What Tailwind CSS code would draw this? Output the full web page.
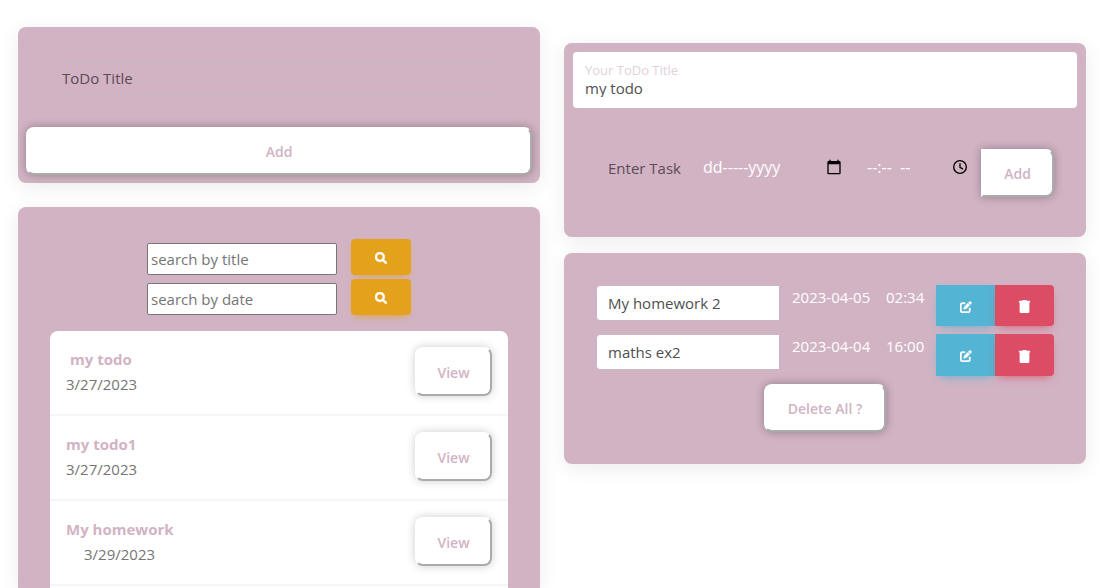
<!DOCTYPE html>
<html lang="en">
<head>
<meta charset="utf-8">
<title>ToDo</title>
<meta name="viewport" content="width=device-width, initial-scale=1">
<script src="https://cdn.jsdelivr.net/npm/@tailwindcss/browser@4"></script>
</head>
<body class="bg-white font-['Segoe_UI','Open_Sans',sans-serif] text-[15px] leading-6 text-[#4f4f4f]">
<svg class="hidden" aria-hidden="true">
  <symbol id="search" viewBox="0 0 512 512"><path fill="currentColor" stroke="currentColor" stroke-width="24" d="M505 442.7L405.3 343c-4.500-4.500-10.600-7-17-7H372c27.600-35.300 44-79.700 44-128C416 93.100 322.900 0 208 0S0 93.100 0 208s93.100 208 208 208c48.300 0 92.700-16.400 128-44v16.300c0 6.400 2.500 12.500 7 17l99.700 99.700c9.400 9.400 24.600 9.400 33.900 0l28.300-28.300c9.400-9.400 9.400-24.600.1-34zM208 336c-70.700 0-128-57.200-128-128 0-70.700 57.200-128 128-128 70.700 0 128 57.200 128 128 0 70.700-57.200 128-128 128z"/></symbol>
  <symbol id="edit" viewBox="0 0 512 512"><path fill="currentColor" stroke="currentColor" stroke-width="16" d="M472 40c-25-25-61-25-83 0l-35 35 83 83 35-35c24-24 24-60 0-83zM331 98L195 234c-6 6-11 14-14 23l-23 70c-5 16 11 31 27 27l70-23c9-3 17-8 23-14l136-136zM96 64C43 64 0 107 0 160v256c0 53 43 96 96 96h256c53 0 96-43 96-96v-96c0-18-14-32-32-32s-32 14-32 32v96c0 18-14 32-32 32H96c-18 0-32-14-32-32V160c0-18 14-32 32-32h96c18 0 32-14 32-32s-14-32-32-32z"/></symbol>
  <symbol id="trash" viewBox="0 0 448 512"><path fill="currentColor" d="M432 32H312l-9.400-18.700A24 24 0 0 0 281.100 0H166.800a23.700 23.700 0 0 0-21.400 13.300L136 32H16A16 16 0 0 0 0 48v32a16 16 0 0 0 16 16h416a16 16 0 0 0 16-16V48a16 16 0 0 0-16-16zM32 96h384v368a48 48 0 0 1-48 48H80a48 48 0 0 1-48-48z"/></symbol>
</svg>
<main class="grid h-screen grid-cols-2 gap-6 overflow-hidden pl-[18px] pr-[17px]">
  <div class="flex min-h-0 flex-col gap-6 pt-[27px]">
    <form class="rounded-lg bg-[#d1b3c4] p-2 shadow-[0_4px_20px_rgba(0,0,0,0.08)]">
      <div class="px-6 pt-[27px] pb-8">
        <input type="text" aria-label="ToDo Title" placeholder="ToDo Title" class="block h-[33px] w-full rounded border border-[#c9b5c4] px-[11px] pb-[2px] placeholder:text-[#5d4a56]">
      </div>
      <button type="button" class="block h-12 w-full rounded-lg border-2 border-white [border-style:outset] bg-white pt-[2px] text-sm font-semibold text-[#d1b3c4] shadow-[0_0_10px_rgba(0,0,0,0.3)]">Add</button>
    </form>
    <section class="flex min-h-0 flex-1 flex-col rounded-t-lg bg-[#d1b3c4] px-8 pt-8 shadow-[0_4px_20px_rgba(0,0,0,0.08)]">
      <form class="flex flex-col items-center gap-1">
        <div class="flex items-end gap-[14px]">
          <input type="text" aria-label="Search by title" placeholder="search by title" class="h-8 w-[190px] rounded-xs border border-[#767676] bg-white px-[3px] placeholder:text-[#757575]">
          <button type="button" aria-label="Search titles" class="flex h-9 w-[60px] items-center justify-center rounded bg-[#e4a11b] pt-[2px] text-white shadow-[0_4px_9px_-4px_#e4a11b]"><svg class="size-3 overflow-visible"><use href="#search"/></svg></button>
        </div>
        <div class="flex items-end gap-[14px]">
          <input type="text" aria-label="Search by date" placeholder="search by date" class="h-8 w-[190px] rounded-xs border border-[#767676] bg-white px-[3px] placeholder:text-[#757575]">
          <button type="button" aria-label="Search dates" class="flex h-9 w-[60px] items-center justify-center rounded bg-[#e4a11b] pt-[2px] text-white shadow-[0_4px_9px_-4px_#e4a11b]"><svg class="size-3 overflow-visible"><use href="#search"/></svg></button>
        </div>
      </form>
      <ul class="mt-4 min-h-0 flex-1 overflow-hidden rounded-t-lg bg-white">
        <li class="flex items-start justify-between border-b-2 border-[#f5f5f5] px-4 pt-4 pb-[17px]">
          <div class="leading-[25px]"><p class="pl-1 font-bold text-[#d1b3c4]">my todo</p><p class="text-[#757575]">3/27/2023</p></div>
          <button type="button" class="h-[49px] w-[77px] rounded-lg border-2 border-white [border-style:outset] bg-white pt-[2px] text-sm font-semibold text-[#d1b3c4] shadow-[0_0_10px_rgba(0,0,0,0.2)]">View</button>
        </li>
        <li class="flex items-start justify-between border-b-2 border-[#f5f5f5] px-4 pt-4 pb-[17px]">
          <div class="leading-[25px]"><p class="font-bold text-[#d1b3c4]">my todo1</p><p class="text-[#757575]">3/27/2023</p></div>
          <button type="button" class="h-[49px] w-[77px] rounded-lg border-2 border-white [border-style:outset] bg-white pt-[2px] text-sm font-semibold text-[#d1b3c4] shadow-[0_0_10px_rgba(0,0,0,0.2)]">View</button>
        </li>
        <li class="flex items-start justify-between border-b-2 border-[#f5f5f5] px-4 pt-4 pb-[17px]">
          <div class="leading-[25px]"><p class="font-bold text-[#d1b3c4]">My homework</p><p class="pl-[18px] text-[#757575]">3/29/2023</p></div>
          <button type="button" class="h-[49px] w-[77px] rounded-lg border-2 border-white [border-style:outset] bg-white pt-[2px] text-sm font-semibold text-[#d1b3c4] shadow-[0_0_10px_rgba(0,0,0,0.2)]">View</button>
        </li>
      </ul>
    </section>
  </div>

  <div class="flex flex-col gap-4 pt-[43px]">
    <form class="rounded-lg bg-[#d1b3c4] px-[9px] pt-[9px] pb-10 shadow-[0_4px_20px_rgba(0,0,0,0.08)]">
      <div class="flex h-14 flex-col rounded bg-white px-3 pt-[9px]">
        <label for="title" class="text-[13px] leading-[18px] text-[#e3d1dc]">Your ToDo Title</label>
        <input id="title" type="text" value="my todo" class="h-[18px] w-full">
      </div>
      <div class="mt-[41px] flex h-12 px-[23px]">
        <input type="text" aria-label="Enter Task" placeholder="Enter Task" class="h-[38px] w-[95px] rounded-l border border-r-0 border-[#cdb4c4] pl-[11px] placeholder:text-[#5d4a56]">
        <label class="flex h-[38px] flex-1 items-center border border-r-0 border-[#cdb4c4] pr-[13px] pb-[2px] pl-[11px]">
          <input type="text" aria-label="Date" placeholder="dd-----yyyy" class="w-full min-w-0 flex-1 text-base text-white placeholder:text-white">
          <svg class="size-4 text-black" viewBox="0 0 24 24" fill="currentColor" aria-hidden="true"><path d="M20 3h-1V1h-2v2H7V1H5v2H4c-1.100 0-2 .9-2 2v16c0 1.100.9 2 2 2h16c1.100 0 2-.9 2-2V5c0-1.100-.9-2-2-2zm0 18H4V8h16v13z"/></svg>
        </label>
        <label class="flex h-[38px] w-[126px] items-center border border-r-0 border-[#cdb4c4] pr-[13px] pb-[2px] pl-[11px]">
          <input type="text" aria-label="Time" placeholder="--:--  --" class="w-full min-w-0 flex-1 text-base whitespace-pre text-white placeholder:text-white">
          <svg class="size-4 text-black" viewBox="0 0 24 24" fill="none" stroke="currentColor" stroke-width="2" aria-hidden="true"><circle cx="12" cy="12" r="9.500"/><path d="M12 6.500v6l4.500 2.700"/></svg>
        </label>
        <button type="button" class="h-12 w-[73px] rounded-r-lg border-2 border-white [border-style:outset] bg-white pt-[2px] text-sm font-semibold text-[#d1b3c4] shadow-[0_0_10px_rgba(0,0,0,0.3)]">Add</button>
      </div>
    </form>
    <section class="flex flex-col items-center gap-2 rounded-lg bg-[#d1b3c4] p-8 shadow-[0_4px_20px_rgba(0,0,0,0.08)]">
      <div class="flex w-full items-start">
        <input type="text" aria-label="Task 1" value="My homework 2" class="h-9 min-w-0 flex-1 rounded-l border border-[#c9b5c4] bg-white px-[11px]">
        <span class="w-[94px] pl-3 whitespace-nowrap text-white">2023-04-05</span>
        <span class="w-[62px] pl-3 text-white">02:34</span>
        <button type="button" aria-label="Edit task 1" class="flex h-[41px] w-[59px] items-center justify-center bg-[#54b4d3] pt-[2px] text-white shadow-[0_4px_9px_-4px_#54b4d3]"><svg class="size-3"><use href="#edit"/></svg></button>
        <button type="button" aria-label="Delete task 1" class="flex h-[41px] w-[59px] items-center justify-center rounded-r bg-[#dc4c64] pt-[2px] text-white shadow-[0_4px_9px_-4px_#dc4c64]"><svg class="size-[13px]"><use href="#trash"/></svg></button>
      </div>
      <div class="flex w-full items-start">
        <input type="text" aria-label="Task 2" value="maths ex2" class="h-9 min-w-0 flex-1 rounded-l border border-[#c9b5c4] bg-white px-[11px]">
        <span class="w-[94px] pl-3 whitespace-nowrap text-white">2023-04-04</span>
        <span class="w-[62px] pl-3 text-white">16:00</span>
        <button type="button" aria-label="Edit task 2" class="flex h-[42px] w-[59px] items-center justify-center bg-[#54b4d3] pt-[2px] text-white shadow-[0_4px_9px_-4px_#54b4d3]"><svg class="size-3"><use href="#edit"/></svg></button>
        <button type="button" aria-label="Delete task 2" class="flex h-[42px] w-[59px] items-center justify-center rounded-r bg-[#dc4c64] pt-[2px] text-white shadow-[0_4px_9px_-4px_#dc4c64]"><svg class="size-[13px]"><use href="#trash"/></svg></button>
      </div>
      <button type="button" class="h-12 w-[122px] rounded-lg border-2 border-white [border-style:outset] bg-white pt-[2px] text-sm font-semibold text-[#d1b3c4] shadow-[0_0_10px_rgba(0,0,0,0.3)]">Delete All ?</button>
    </section>
  </div>
</main>
</body>
</html>
